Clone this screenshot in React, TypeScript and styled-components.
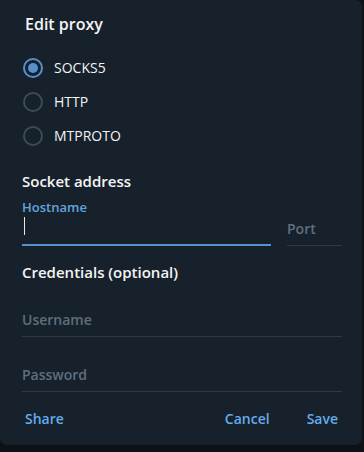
import React from 'react';
import styled, { createGlobalStyle } from 'styled-components';

const GlobalStyle = createGlobalStyle`
    html, body {
        margin: 0;
        padding: 0;
        background: #0e1217;
    }
    body {
        font-family: 'Open Sans', 'Noto Sans', sans-serif;
        -webkit-font-smoothing: antialiased;
    }
`;

const Dialog = styled.div`
    width: 362px;
    height: 445px;
    box-sizing: border-box;
    background: #17212b;
    border-radius: 0 7px 7px 7px;
    padding: 13px 20px 0 22px;
    display: flex;
    flex-direction: column;
`;

const Title = styled.div`
    margin-left: 3px;
    font-size: 16px;
    line-height: 22px;
    font-weight: 600;
    color: #f5f5f5;
`;

const RadioList = styled.div`
    margin-top: 16px;
    display: flex;
    flex-direction: column;
`;

const RadioRow = styled.label`
    height: 34px;
    display: flex;
    align-items: center;
    gap: 11px;
    padding-left: 1px;
    cursor: pointer;
`;

const RadioCircle = styled.span<{ checked?: boolean }>`
    width: 20px;
    height: 20px;
    box-sizing: border-box;
    border-radius: 50%;
    border: 2px solid ${(props) => (props.checked ? '#5591cf' : '#3d4b59')};
    display: flex;
    align-items: center;
    justify-content: center;

    &::after {
        content: '';
        width: 10px;
        height: 10px;
        border-radius: 50%;
        background: #5591cf;
        display: ${(props) => (props.checked ? 'block' : 'none')};
    }
`;

const RadioLabel = styled.span`
    font-size: 14px;
    line-height: 20px;
    color: #f2f4f6;
`;

const SectionHeader = styled.div<{ top: number }>`
    margin-top: ${(props) => props.top}px;
    font-size: 15px;
    line-height: 20px;
    font-weight: 600;
    color: #f5f5f5;
`;

const AddressRow = styled.div`
    display: flex;
    align-items: flex-end;
    gap: 16px;
    margin-top: 8px;
`;

const FieldBox = styled.div<{ width?: number; grow?: boolean; active?: boolean; top?: number }>`
    position: relative;
    ${(props) => (props.width ? `width: ${props.width}px;` : '')}
    ${(props) => (props.grow ? 'flex: 1;' : '')}
    margin-top: ${(props) => props.top || 0}px;
    display: flex;
    flex-direction: column;
    padding-bottom: ${(props) => (props.active ? 5 : 6)}px;
    border-bottom: ${(props) => (props.active ? '2px solid #5591cf' : '1px solid #2c3a47')};
`;

const FloatLabel = styled.div`
    font-size: 13px;
    line-height: 17px;
    font-weight: 600;
    color: #64a4de;
    margin-bottom: 3px;
`;

const Input = styled.input`
    height: 20px;
    min-width: 0;
    padding: 0;
    border: 0;
    outline: none;
    background: transparent;
    font-family: inherit;
    font-size: 14px;
    line-height: 20px;
    color: #f5f5f5;
    caret-color: transparent;

    &::placeholder {
        color: #5f6f7f;
        font-weight: 600;
    }
`;

const Caret = styled.span`
    position: absolute;
    left: 2px;
    bottom: 9px;
    width: 1px;
    height: 18px;
    background: #e8e8e8;
`;

const Buttons = styled.div`
    margin: 17px 4px 0 3px;
    display: flex;
    align-items: center;
    gap: 37px;
`;

const Spacer = styled.div`
    flex: 1;
`;

const LinkButton = styled.button`
    padding: 0;
    border: 0;
    background: none;
    font-family: inherit;
    font-size: 14px;
    line-height: 20px;
    font-weight: 600;
    color: #64acec;
    cursor: pointer;
`;

const proxyTypes = ['SOCKS5', 'HTTP', 'MTPROTO'];

const App = () => {
    const selected = 'SOCKS5';

    return (
        <>
            <GlobalStyle />
            <Dialog>
                <Title>Edit proxy</Title>
                <RadioList>
                    {proxyTypes.map((type) => (
                        <RadioRow key={type}>
                            <RadioCircle checked={type === selected} />
                            <RadioLabel>{type}</RadioLabel>
                        </RadioRow>
                    ))}
                </RadioList>

                <SectionHeader top={18}>Socket address</SectionHeader>
                <AddressRow>
                    <FieldBox grow active>
                        <FloatLabel>Hostname</FloatLabel>
                        <Input />
                        <Caret />
                    </FieldBox>
                    <FieldBox width={55}>
                        <Input placeholder="Port" />
                    </FieldBox>
                </AddressRow>

                <SectionHeader top={16}>Credentials (optional)</SectionHeader>
                <FieldBox top={28}>
                    <Input placeholder="Username" />
                </FieldBox>
                <FieldBox top={28}>
                    <Input placeholder="Password" />
                </FieldBox>

                <Buttons>
                    <LinkButton>Share</LinkButton>
                    <Spacer />
                    <LinkButton>Cancel</LinkButton>
                    <LinkButton>Save</LinkButton>
                </Buttons>
            </Dialog>
        </>
    );
};

export default App;
